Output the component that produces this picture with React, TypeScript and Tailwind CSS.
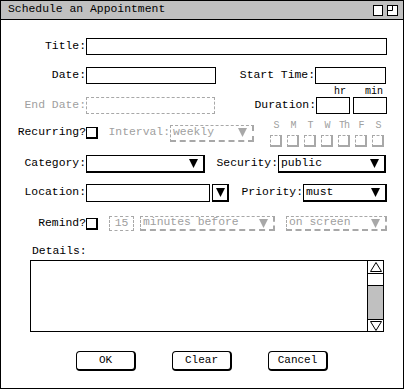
import React from 'react'

// Motif-ish "Schedule an Appointment" dialog

const mono = "font-['Liberation_Mono',monospace]"

function Arrow({ color = '#000' }: { color?: string }) {
  return (
    <svg width="9" height="9" viewBox="0 0 9 9" className="shrink-0">
      <polygon points="0,0 9,0 4.5,9" fill={color} />
    </svg>
  )
}

function Dropdown({ w, value, disabled }: { w: string; value?: string; disabled?: boolean }) {
  const box = disabled
    ? 'border border-dashed border-[#a8a8a8] border-r-2 border-b-2 text-[#a0a0a0]'
    : 'border border-black border-r-2 border-b-2 text-black'
  return (
    <div className={`${w} h-full ${box} flex items-center justify-between pl-[2px] pr-[5px] leading-none`}>
      <span>{value}</span>
      <Arrow color={disabled ? '#a8a8a8' : '#000'} />
    </div>
  )
}

function Label({ w, text, disabled }: { w: string; text: string; disabled?: boolean }) {
  return (
    <div className={`${w} shrink-0 text-right whitespace-pre ${disabled ? 'text-[#a0a0a0]' : 'text-black'}`}>
      {text}
    </div>
  )
}

function Check({ disabled }: { disabled?: boolean }) {
  return (
    <div
      className={`w-[12px] h-[12px] shrink-0 border border-r-2 border-b-2 bg-white ${
        disabled ? 'border-dashed border-[#a8a8a8]' : 'border-black'
      }`}
    />
  )
}

const days = ['S', 'M', 'T', 'W', 'Th', 'F', 'S']

export default function App() {
  return (
    <div className={`w-[404px] h-[390px] bg-white ${mono} text-[11.4px] text-black`}>
      <div className="w-[404px] h-[389px] border border-black flex flex-col">
        {/* title bar */}
        <div className="h-[19px] shrink-0 bg-[#c0c0c0] border-b border-black flex items-center pl-[7px] pr-[4px]">
          <span className="flex-1 leading-none">Schedule an Appointment</span>
          <svg width="26" height="11" viewBox="0 0 26 11" className="mt-[1px]">
            <rect x="0.5" y="0.5" width="9" height="10" fill="#fff" stroke="#000" />
            <rect x="14.5" y="0.5" width="10" height="10" fill="#fff" stroke="#000" />
            <path d="M19.5 0.5 V5.5 H14.5" fill="none" stroke="#000" />
          </svg>
        </div>

        {/* Title */}
        <div className="mt-[18px] h-[17px] flex items-center">
          <Label w="w-[85px]" text="Title:" />
          <div className="w-[301px] h-full border border-black" />
        </div>

        {/* Date / Start time */}
        <div className="mt-[12px] h-[17px] flex items-center">
          <Label w="w-[85px]" text="Date:" />
          <div className="w-[130px] h-full border border-black" />
          <Label w="w-[99px]" text="Start Time:" />
          <div className="w-[71px] h-full border border-black" />
        </div>

        {/* hr / min */}
        <div className="h-[13px] flex items-end text-[10px] leading-[10px]">
          <span className="ml-[333px]">hr</span>
          <span className="ml-[19px]">min</span>
        </div>

        {/* End date / duration */}
        <div className="h-[17px] flex items-center">
          <Label w="w-[85px]" text="End Date:" disabled />
          <div className="w-[129px] h-full border border-dashed border-[#a8a8a8]" />
          <Label w="w-[101px]" text="Duration:" />
          <div className="w-[34px] h-full border border-black" />
          <div className="ml-[3px] w-[34px] h-full border border-black" />
        </div>

        {/* Recurring */}
        <div className="mt-[5px] h-[28px] flex items-center">
          <Label w="w-[85px]" text="Recurring?" />
          <Check />
          <Label w="w-[72px]" text="Interval:" disabled />
          <div className="h-[17px] flex">
            <Dropdown w="w-[84px]" value="weekly" disabled />
          </div>
          <div className="ml-[16px] h-full flex gap-[5px]">
            {days.map((d, i) => (
              <div key={i} className="w-[12px] h-full flex flex-col items-center justify-between pt-[2px]">
                <span className="text-[10px] leading-[9px] text-[#a0a0a0] whitespace-nowrap tracking-[-1px]">{d}</span>
                <Check disabled />
              </div>
            ))}
          </div>
        </div>

        {/* Category / Security */}
        <div className="mt-[8px] h-[18px] flex items-center">
          <Label w="w-[85px]" text="Category:" />
          <Dropdown w="w-[119px]" />
          <Label w="w-[73px]" text="Security:" />
          <Dropdown w="w-[108px]" value="public" />
        </div>

        {/* Location / Priority */}
        <div className="mt-[11px] h-[18px] flex items-center">
          <Label w="w-[85px]" text="Location:" />
          <div className="w-[124px] h-full border border-black" />
          <div className="ml-[2px] w-[17px] h-full border border-black border-r-2 border-b-2 flex items-center justify-center">
            <Arrow />
          </div>
          <Label w="w-[74px]" text="Priority:" />
          <Dropdown w="w-[84px]" value="must" />
        </div>

        {/* Remind */}
        <div className="mt-[14px] h-[15px] flex items-center">
          <Label w="w-[85px]" text="Remind?" />
          <Check />
          <div className="ml-[11px] w-[25px] h-full border border-dashed border-[#a8a8a8] text-[#a0a0a0] flex items-center justify-center leading-none">
            15
          </div>
          <div className="ml-[6px] h-full flex">
            <Dropdown w="w-[135px]" value="minutes before" disabled />
          </div>
          <div className="ml-[11px] h-full flex">
            <Dropdown w="w-[101px]" value="on screen" disabled />
          </div>
        </div>

        {/* Details */}
        <div className="mt-[13px] h-[14px] leading-[14px] pl-[31px]">Details:</div>
        <div className="mt-[2px] ml-[29px] w-[354px] h-[72px] border border-black flex">
          <div className="flex-1" />
          <div className="w-[16px] h-full border-l border-black flex flex-col">
            <div className="h-[13px] border-b border-black flex items-center justify-center">
              <svg width="12" height="10" viewBox="0 0 12 10">
                <polygon points="6,0.5 11.5,9.5 0.5,9.5" fill="#fff" stroke="#000" />
              </svg>
            </div>
            <div className="h-[12px] bg-white border-b border-black" />
            <div className="flex-1 bg-[#c0c0c0]" />
            <div className="h-[12px] border-t border-black flex items-center justify-center">
              <svg width="12" height="10" viewBox="0 0 12 10">
                <polygon points="0.5,0.5 11.5,0.5 6,9.5" fill="#fff" stroke="#000" />
              </svg>
            </div>
          </div>
        </div>

        {/* Buttons */}
        <div className="mt-[19px] h-[20px] flex">
          <button className="ml-[75px] w-[60px] h-full rounded-[4px] border border-black border-r-2 border-b-2 bg-white text-[11px] leading-none">
            OK
          </button>
          <button className="ml-[36px] w-[60px] h-full rounded-[4px] border border-black border-r-2 border-b-2 bg-white text-[11px] leading-none">
            Clear
          </button>
          <button className="ml-[36px] w-[60px] h-full rounded-[4px] border border-black border-r-2 border-b-2 bg-white text-[11px] leading-none">
            Cancel
          </button>
        </div>
      </div>
    </div>
  )
}
